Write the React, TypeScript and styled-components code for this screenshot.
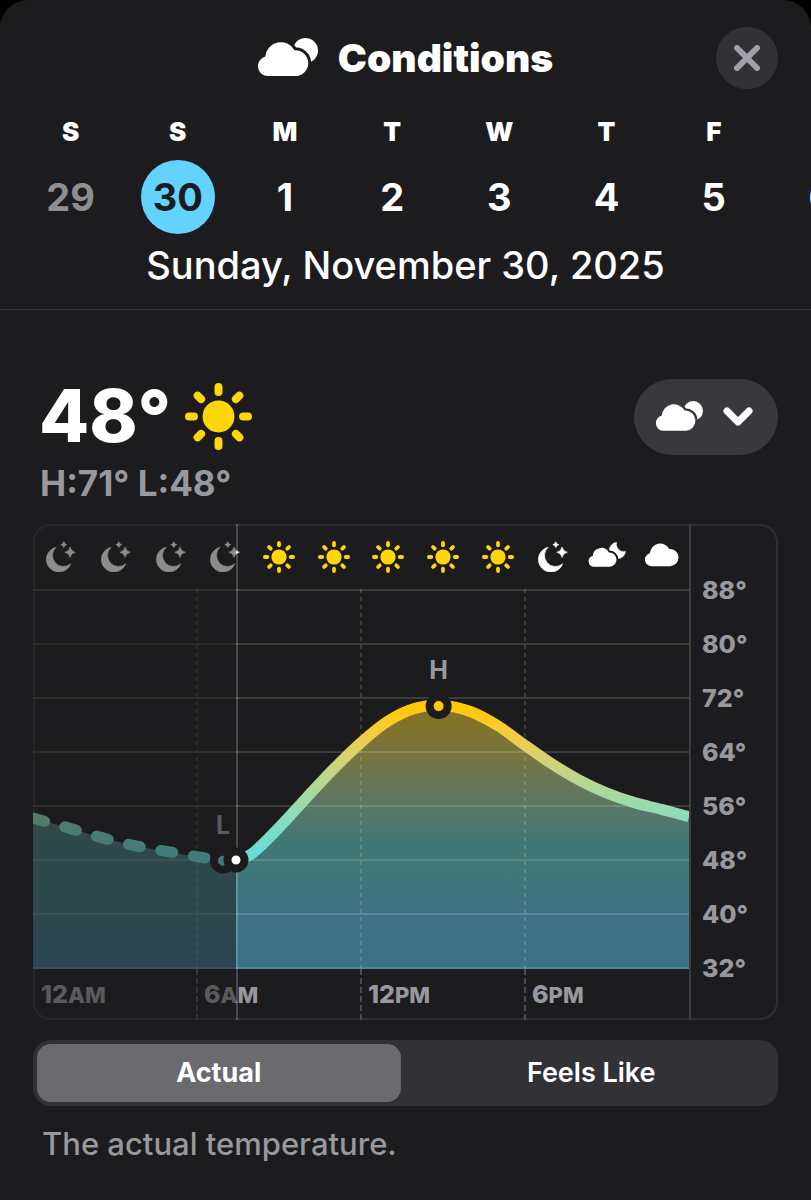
import React, { useId, useState } from "react";
import styled, { createGlobalStyle, css } from "styled-components";

const color = {
  sheet: "#1c1c1e",
  text: "#ffffff",
  secondary: "#98989f",
  past: "#8e8e93",
  accent: "#64d2ff",
  sun: "#ffd60a",
  line: "rgba(255, 255, 255, 0.14)",
};

const GlobalStyle = createGlobalStyle`
  * { box-sizing: border-box; }
  body {
    margin: 0;
    background: #000;
    color: ${color.text};
    font-family: Inter, "Liberation Sans", sans-serif;
  }
  button { font: inherit; color: inherit; border: 0; padding: 0; background: none; cursor: pointer; }
  svg { display: block; }
`;

/* ---------- icons ---------- */

const CLOUD = "M84 167 A30 30 0 0 1 76 108 A47 47 0 0 1 164 89 A39 39 0 0 1 169 167 Z";

const Svg = styled.svg<{ $w: number }>`
  width: ${(p) => p.$w}px;
  height: auto;
  flex: none;
`;

function CloudSunIcon({ size }: { size: number }) {
  const id = useId();
  return (
    <Svg $w={size} viewBox="54 52 181 120" aria-hidden="true">
      <mask id={id} maskUnits="userSpaceOnUse" x="0" y="0" width="300" height="200">
        <rect width="300" height="200" fill="#fff" />
        <path d={CLOUD} fill="#000" stroke="#000" strokeWidth="18" />
      </mask>
      <path d={CLOUD} fill="#fff" />
      <circle cx="197" cy="90" r="38" fill="#fff" mask={`url(#${id})`} />
    </Svg>
  );
}

function CloudIcon() {
  return (
    <Svg $w={34} viewBox="54 62 154 126" aria-hidden="true">
      <path d={CLOUD} fill="#fff" />
    </Svg>
  );
}

function CloudMoonIcon() {
  const id = useId();
  const place = "translate(239 98) scale(0.556) translate(-54 -63)";
  return (
    <Svg $w={39} viewBox="234 81 118 86" aria-hidden="true">
      <mask id={id} maskUnits="userSpaceOnUse" x="200" y="50" width="200" height="150">
        <rect x="200" y="50" width="200" height="150" fill="#fff" />
        <path d={CLOUD} transform={place} fill="#000" stroke="#000" strokeWidth="20" />
      </mask>
      <path d={CLOUD} transform={place} fill="#fff" />
      <path
        d="M324 82 A25 25 0 1 0 351 109 A22 22 0 0 1 324 82 Z"
        fill="#fff"
        stroke="#fff"
        strokeWidth="1"
        strokeLinejoin="round"
        mask={`url(#${id})`}
      />
    </Svg>
  );
}

const star = (x: number, y: number, r: number) => {
  const k = r * 0.16;
  return (
    `M${x} ${y - r} Q${x + k} ${y - k} ${x + r} ${y} Q${x + k} ${y + k} ${x} ${y + r} ` +
    `Q${x - k} ${y + k} ${x - r} ${y} Q${x - k} ${y - k} ${x} ${y - r} Z`
  );
};

function MoonStarsIcon() {
  return (
    <Svg $w={32} viewBox="80 78 97 96" aria-hidden="true">
      <g fill="#fff" stroke="#fff" strokeWidth="2" strokeLinejoin="round">
        <path d="M117 97 A38 38 0 1 0 161 147 A33 33 0 0 1 117 97 Z" />
        <path d={star(140, 89, 9)} />
        <path d={star(159, 112, 16)} />
      </g>
    </Svg>
  );
}

function SunIcon({ size }: { size: number }) {
  return (
    <Svg $w={size} viewBox="-101 -101 202 202" aria-hidden="true">
      <circle r="48" fill={color.sun} />
      <g stroke={color.sun} strokeWidth="24" strokeLinecap="round">
        {[0, 45, 90, 135, 180, 225, 270, 315].map((a) => (
          <path key={a} d="M0 -74 V-89" transform={`rotate(${a})`} />
        ))}
      </g>
    </Svg>
  );
}

/* ---------- sheet and header ---------- */

const Sheet = styled.main`
  min-height: 100vh;
  background: ${color.sheet};
  border-radius: 28px 28px 0 0;
  overflow: hidden;
`;

const Header = styled.header`
  display: grid;
  grid-template-columns: 1fr auto 1fr;
  align-items: center;
  padding: 27px 33px 0;
`;

const Title = styled.h1`
  grid-column: 2;
  display: flex;
  align-items: center;
  gap: 20px;
  margin: 0;
  font-size: 39px;
  line-height: 46px;
  font-weight: 900;
`;

const CloseButton = styled.button`
  grid-column: 3;
  justify-self: end;
  display: grid;
  place-items: center;
  width: 62px;
  height: 62px;
  border-radius: 50%;
  background: #323236;
`;

const DayStrip = styled.nav`
  display: flex;
  overflow: hidden;
  padding: 28px 0 0 17px;
`;

const Day = styled.button`
  flex: 0 0 13.5%;
  display: flex;
  flex-direction: column;
  align-items: center;
  gap: 13px;
`;

const Weekday = styled.span`
  font-size: 26px;
  line-height: 30px;
  font-weight: 900;
`;

const DayNumber = styled.span<{ $state: "past" | "selected" | "next" }>`
  display: grid;
  place-items: center;
  width: 74px;
  height: 74px;
  border-radius: 50%;
  font-size: 38px;
  font-weight: 700;
  ${(p) => p.$state === "past" && css`color: ${color.past};`}
  ${(p) => p.$state === "selected" && css`background: ${color.accent}; color: ${color.sheet};`}
`;

const FullDate = styled.p`
  margin: 0;
  padding: 9px 16px 22px;
  border-bottom: 1px solid #38383a;
  text-align: center;
  font-size: 38px;
  line-height: 44px;
  font-weight: 500;
`;

/* ---------- summary ---------- */

const Content = styled.section`
  padding: 69px 33px 40px;
`;

const Summary = styled.div`
  display: flex;
  align-items: flex-start;
  justify-content: space-between;
  padding-left: 6px;
`;

const Current = styled.div`
  display: flex;
  align-items: center;
  gap: 14px;
  font-size: 73px;
  line-height: 74px;
  font-weight: 800;
`;

const MetricButton = styled.button`
  display: flex;
  align-items: center;
  justify-content: center;
  gap: 20px;
  width: 144px;
  height: 76px;
  padding-right: 3px;
  border-radius: 38px;
  background: #39383d;
`;

const HighLow = styled.p`
  margin: 8px 0 21px 7px;
  color: ${color.secondary};
  font-size: 35px;
  line-height: 40px;
  font-weight: 700;
`;

/* ---------- chart ---------- */

const ChartFrame = styled.div`
  display: flex;
  border-radius: 18px;
  overflow: hidden;
  box-shadow: inset 0 0 0 2px #303032;
`;

const PlotColumn = styled.div`
  position: relative;
  flex: 1;
  min-width: 0;
`;

const IconRow = styled.div`
  display: grid;
  grid-template-columns: repeat(12, 1fr);
  place-items: center;
  height: 65px;
`;

const PlotArea = styled.div`
  position: relative;
`;

const Plot = styled.svg`
  width: 100%;
  height: auto;
`;

const MarkerText = styled.text`
  fill: ${color.secondary};
  font-size: 25px;
  font-weight: 700;
  text-anchor: middle;
`;

const HourRow = styled.div`
  display: grid;
  grid-template-columns: repeat(4, 1fr);
  height: 51px;
`;

const Hour = styled.span`
  display: flex;
  align-items: baseline;
  margin-left: -1px;
  padding-left: 6px;
  border-left: 2px dashed #4c4c4e;
  color: ${color.secondary};
  font-size: 25px;
  line-height: 50px;
  font-weight: 800;
  &:first-child { margin-left: 0; border-left-color: transparent; }
`;

const Meridiem = styled.small`
  font-size: 22px;
`;

const PastShade = styled.div`
  position: absolute;
  inset: 0 auto 0 0;
  width: 31.25%;
  background: rgba(28, 28, 30, 0.5);
  background-clip: padding-box;
  border-right: 2px solid rgba(255, 255, 255, 0.2);
`;

const NowDot = styled.span`
  position: absolute;
  z-index: 1;
  width: 25px;
  height: 25px;
  border: 8px solid ${color.sheet};
  border-radius: 50%;
  background: #fff;
  transform: translate(-50%, -50%);
`;

const Scale = styled.div`
  display: flex;
  flex-direction: column;
  justify-content: space-between;
  width: 89px;
  padding: 53px 0 39px 11px;
  border-left: 2px solid #3d3d3f;
  color: ${color.secondary};
  font-size: 25px;
  line-height: 26px;
  font-weight: 800;
`;

/* ---------- segmented control ---------- */

const Segments = styled.div`
  display: grid;
  grid-template-columns: 1fr 1fr;
  margin-top: 20px;
  border-radius: 18px;
  background: #323236;
`;

const Segment = styled.label<{ $on: boolean }>`
  margin: 4px 5px 4px 4px;
  border-radius: 14px;
  text-align: center;
  font-size: 27px;
  line-height: 58px;
  font-weight: ${(p) => (p.$on ? 700 : 600)};
  background: ${(p) => (p.$on ? "#6a6a6f" : "transparent")};
  cursor: pointer;
`;

const HiddenRadio = styled.input`
  appearance: none;
  position: absolute;
  margin: 0;
`;

const Caption = styled.p`
  margin: 18px 9px 0;
  color: ${color.secondary};
  font-size: 31px;
  line-height: 40px;
  font-weight: 500;
`;

/* ---------- data ---------- */

const days = [
  ["S", 29], ["S", 30], ["M", 1], ["T", 2], ["W", 3], ["T", 4], ["F", 5], ["S", 6],
] as const;

const conditions = [
  "moon", "moon", "moon", "moon", "sun", "sun", "sun", "sun", "sun", "moon", "cloudMoon", "cloud",
];

const ticks = [88, 80, 72, 64, 56, 48, 40, 32];
const hours = [["12", "AM"], ["6", "AM"], ["12", "PM"], ["6", "PM"]];

const NOW = 7.44;
const readings: [number, number][] = [
  [0, 54.2], [1, 53.1], [2, 51.9], [3, 50.8], [4, 49.9], [5, 49.2], [6, 48.5], [7, 47.9], [NOW, 48],
  [8, 48.9], [9, 52.8], [10, 57.2], [11, 61.5], [12, 65.4], [13, 68.6], [14, 70.5], [15, 70.9],
  [16, 70], [17, 67.9], [18, 65], [19, 62.2], [20, 59.8], [21, 57.9], [22, 56.5], [23, 55.5], [24, 54.4],
];

const W = 656;
const H = 380;
const px = (h: number) => (h / 24) * W;
const py = (t: number) => 1 + (88 - t) * 6.75;

function smooth(points: [number, number][]) {
  const p = points.map(([h, t]) => [px(h), py(t)]);
  const slope = p.map((_, i) => {
    const a = p[Math.max(i - 1, 0)];
    const b = p[Math.min(i + 1, p.length - 1)];
    return (b[1] - a[1]) / (b[0] - a[0]);
  });
  return p
    .slice(1)
    .map((b, i) => {
      const a = p[i];
      const d = (b[0] - a[0]) / 3;
      return `C${a[0] + d} ${a[1] + slope[i] * d} ${b[0] - d} ${b[1] - slope[i + 1] * d} ${b[0]} ${b[1]}`;
    })
    .reduce((s, c) => s + c, `M${p[0][0]} ${p[0][1]}`);
}

const whole = smooth(readings);
const past = smooth(readings.filter(([h]) => h <= NOW));
const future = smooth(readings.filter(([h]) => h >= NOW));

const lineStops = [[71, "#ffc800"], [68, "#fbcb2c"], [64, "#dfd068"], [60, "#bcd68c"], [56, "#98dbae"], [52, "#79dcc8"], [48, "#66dbdc"]] as const;
const fillStops = [[71, "#86701f"], [67, "#80732e"], [63, "#777542"], [56, "#5b7766"], [50.5, "#407775"], [46, "#407779"], [41, "#3f7383"], [32, "#3c7089"]] as const;

function Stops({ list }: { list: readonly (readonly [number, string])[] }) {
  return (
    <>
      {list.map(([t, c]) => (
        <stop key={t} offset={py(t) / H} stopColor={c} />
      ))}
    </>
  );
}

function ConditionIcon({ kind }: { kind: string }) {
  if (kind === "sun") return <SunIcon size={32} />;
  if (kind === "cloud") return <CloudIcon />;
  if (kind === "cloudMoon") return <CloudMoonIcon />;
  return <MoonStarsIcon />;
}

function TemperatureChart() {
  return (
    <ChartFrame>
      <PlotColumn>
        <IconRow>
          {conditions.map((kind, i) => (
            <ConditionIcon key={i} kind={kind} />
          ))}
        </IconRow>
        <PlotArea>
          <Plot viewBox={`0 0 ${W} ${H}`} role="img" aria-label="Hourly temperature">
            <defs>
              <linearGradient id="curve" gradientUnits="userSpaceOnUse" x1="0" y1="0" x2="0" y2={H}>
                <Stops list={lineStops} />
              </linearGradient>
              <linearGradient id="area" gradientUnits="userSpaceOnUse" x1="0" y1="0" x2="0" y2={H}>
                <Stops list={fillStops} />
              </linearGradient>
            </defs>
            <path d={`${whole}V${H}H0Z`} fill="url(#area)" />
            {ticks.map((t) => (
              <path key={t} d={`M0 ${py(t)}H${W}`} stroke={color.line} strokeWidth="2" />
            ))}
            {[6, 12, 18].map((h) => (
              <path key={h} d={`M${px(h)} 0V${H}`} stroke={color.line} strokeWidth="2" strokeDasharray="4 4" />
            ))}
            <g fill="none" stroke="url(#curve)" strokeWidth="11">
              <path d={past} strokeLinecap="round" strokeDasharray="12 21" />
              <path d={future} />
            </g>
            <g stroke={color.sheet} strokeWidth="8">
              <circle cx={px(6.95)} cy={py(47.9)} r="9" fill="#66dbdc" />
              <circle cx={px(14.84)} cy={py(70.8)} r="9" fill="#ffc800" />
            </g>
            <MarkerText x={px(6.95)} y="245">L</MarkerText>
            <MarkerText x={px(14.84)} y="90">H</MarkerText>
          </Plot>
          <NowDot style={{ left: `${(NOW / 24) * 100}%`, top: `${(py(48) / H) * 100}%` }} />
        </PlotArea>
        <HourRow>
          {hours.map(([n, m]) => (
            <Hour key={n + m}>
              {n}
              <Meridiem>{m}</Meridiem>
            </Hour>
          ))}
        </HourRow>
        <PastShade />
      </PlotColumn>
      <Scale>
        {ticks.map((t) => (
          <span key={t}>{t}°</span>
        ))}
      </Scale>
    </ChartFrame>
  );
}

export default function App() {
  const [mode, setMode] = useState("Actual");
  return (
    <>
      <GlobalStyle />
      <Sheet>
        <Header>
          <Title>
            <CloudSunIcon size={60} />
            Conditions
          </Title>
          <CloseButton aria-label="Close">
            <Svg $w={26} viewBox="0 0 26 26" aria-hidden="true">
              <path d="M3 3L23 23M23 3L3 23" stroke="#a0a0a8" strokeWidth="6" strokeLinecap="round" />
            </Svg>
          </CloseButton>
        </Header>
        <DayStrip>
          {days.map(([w, n]) => (
            <Day key={n}>
              <Weekday>{w}</Weekday>
              <DayNumber $state={n === 29 ? "past" : n === 30 ? "selected" : "next"}>{n}</DayNumber>
            </Day>
          ))}
        </DayStrip>
        <FullDate>Sunday, November 30, 2025</FullDate>
        <Content>
          <Summary>
            <Current>
              48°
              <SunIcon size={67} />
            </Current>
            <MetricButton aria-label="Choose metric">
              <CloudSunIcon size={47} />
              <Svg $w={30} viewBox="0 0 30 20" aria-hidden="true">
                <path d="M4 4L15 15L26 4" fill="none" stroke="#fff" strokeWidth="7" strokeLinecap="round" strokeLinejoin="round" />
              </Svg>
            </MetricButton>
          </Summary>
          <HighLow>H:71° L:48°</HighLow>
          <TemperatureChart />
          <Segments role="radiogroup" aria-label="Temperature type">
            {["Actual", "Feels Like"].map((m) => (
              <Segment key={m} $on={mode === m}>
                <HiddenRadio type="radio" name="mode" checked={mode === m} onChange={() => setMode(m)} />
                {m}
              </Segment>
            ))}
          </Segments>
          <Caption>The actual temperature.</Caption>
        </Content>
      </Sheet>
    </>
  );
}
